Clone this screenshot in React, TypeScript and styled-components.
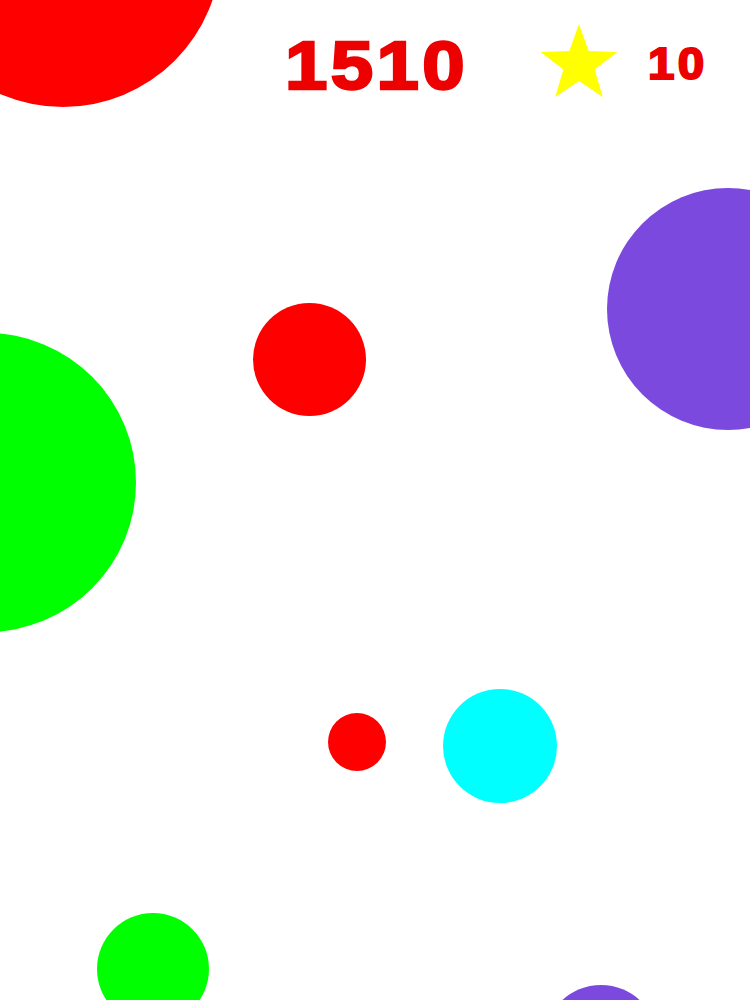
import React from "react";
import styled, { createGlobalStyle } from "styled-components";

const Global = createGlobalStyle`
  html, body { margin: 0; padding: 0; background: #ffffff; }
  body { width: 750px; height: 1000px; overflow: hidden; font-family: "Liberation Sans", Arial, sans-serif; }
`;

const Canvas = styled.div`
  position: relative;
  width: 750px;
  height: 1000px;
  overflow: hidden;
  background: #ffffff;
`;

const Ball = styled.div<{ $color: string }>`
  position: absolute;
  border-radius: 50%;
  background: ${(p) => p.$color};
`;

const Hud = styled.div`
  position: absolute;
  top: 0;
  left: 0;
  right: 0;
  height: 120px;
  display: flex;
  align-items: flex-start;
  padding-left: 285px;
`;

const Score = styled.div`
  width: 252px;
  flex: none;
  margin-top: 31px;
  font-family: "Liberation Sans", Arial, sans-serif;
  font-weight: 700;
  font-size: 68px;
  line-height: 1;
  letter-spacing: 3px;
  color: #ec0000;
  -webkit-text-stroke: 2.5px #ec0000;
  transform: scaleX(1.12);
  transform-origin: left top;
`;

const StarIcon = styled.svg`
  margin-top: 22px;
  width: 84px;
  height: 84px;
  flex: none;
`;

const Stars = styled.div`
  margin-left: 27px;
  margin-top: 42px;
  font-family: "Liberation Sans", Arial, sans-serif;
  font-weight: 700;
  font-size: 44px;
  line-height: 1;
  letter-spacing: 3px;
  color: #ec0000;
  -webkit-text-stroke: 2px #ec0000;
  transform: scaleX(1.08);
  transform-origin: left top;
`;

type B = { cx: number; cy: number; r: number; color: string };

const balls: B[] = [
  { cx: 63, cy: -51, r: 158, color: "#ff0000" },
  { cx: 728, cy: 309, r: 121, color: "#7b49de" },
  { cx: 309, cy: 359.5, r: 56.5, color: "#ff0000" },
  { cx: -13.5, cy: 482.5, r: 149.5, color: "#00ff00" },
  { cx: 357, cy: 742, r: 29, color: "#ff0000" },
  { cx: 500, cy: 746, r: 57, color: "#00ffff" },
  { cx: 152.5, cy: 969, r: 56, color: "#00ff00" },
  { cx: 601, cy: 1042, r: 57, color: "#7b49de" },
];

function starPoints(cx: number, cy: number, R: number, r: number) {
  const pts: string[] = [];
  for (let i = 0; i < 10; i++) {
    const rad = i % 2 === 0 ? R : r;
    const a = (-90 + i * 36) * (Math.PI / 180);
    pts.push(`${(cx + rad * Math.cos(a)).toFixed(2)},${(cy + rad * Math.sin(a)).toFixed(2)}`);
  }
  return pts.join(" ");
}

export default function App() {
  return (
    <>
      <Global />
      <Canvas>
        {balls.map((b, i) => (
          <Ball
            key={i}
            $color={b.color}
            style={{ left: b.cx - b.r, top: b.cy - b.r, width: b.r * 2, height: b.r * 2 }}
          />
        ))}
        <Hud>
          <Score>1510</Score>
          <StarIcon viewBox="0 0 84 84">
            <polygon points={starPoints(42, 42.4, 40.4, 16.5)} fill="#ffff00" />
          </StarIcon>
          <Stars>10</Stars>
        </Hud>
      </Canvas>
    </>
  );
}
